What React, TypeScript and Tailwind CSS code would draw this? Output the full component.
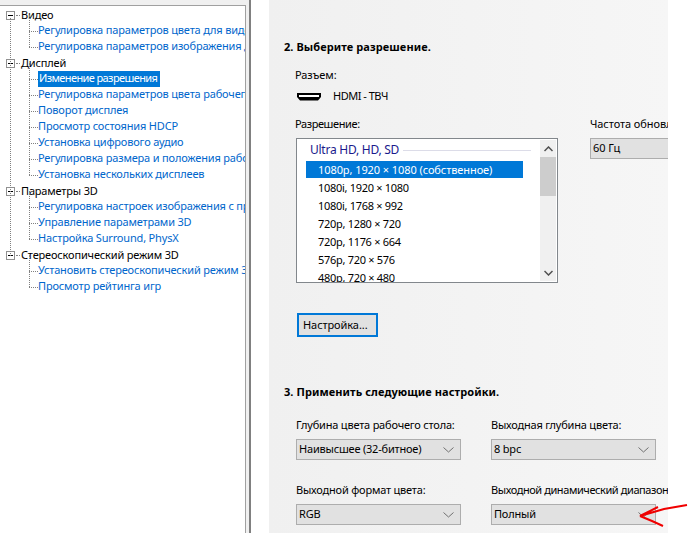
const font = "font-['Noto_Sans','Open_Sans',sans-serif]";

type TreeGroup = { title: string; items: string[] };

const tree: TreeGroup[] = [
  {
    title: "Видео",
    items: ["Регулировка параметров цвета для видео", "Регулировка параметров изображения для видео"],
  },
  {
    title: "Дисплей",
    items: [
      "Изменение разрешения",
      "Регулировка параметров цвета рабочего стола",
      "Поворот дисплея",
      "Просмотр состояния HDCP",
      "Установка цифрового аудио",
      "Регулировка размера и положения рабочего стола",
      "Установка нескольких дисплеев",
    ],
  },
  {
    title: "Параметры 3D",
    items: ["Регулировка настроек изображения с просмотром", "Управление параметрами 3D", "Настройка Surround, PhysX"],
  },
  {
    title: "Стереоскопический режим 3D",
    items: ["Установить стереоскопический режим 3D", "Просмотр рейтинга игр"],
  },
];

const resolutions = [
  "1080i, 1920 × 1080",
  "1080i, 1768 × 992",
  "720p, 1280 × 720",
  "720p, 1176 × 664",
  "576p, 720 × 576",
  "480p, 720 × 480",
];

function Chevron() {
  return (
    <svg width="11" height="6" viewBox="0 0 11 6" className="shrink-0">
      <path d="M0.5 0.5 L5.5 5 L10.5 0.5" fill="none" stroke="#707070" strokeWidth="1" />
    </svg>
  );
}

function Select({ value, width, chevron = true }: { value: string; width: string; chevron?: boolean }) {
  return (
    <div className={`${width} h-[21px] flex items-center justify-between pl-[2px] pr-[6px] bg-[#e1e1e1] border border-[#adadad] text-[11px] text-black whitespace-nowrap`}>
      <span>{value}</span>
      {chevron && <Chevron />}
    </div>
  );
}

function Field({ label, value, width, tight = false }: { label: string; value: string; width: string; tight?: boolean }) {
  return (
    <div className="flex flex-col gap-[7px] tracking-[-0.2px]">
      <div className={`${tight ? "tracking-[-0.42px]" : ""} h-[15px] leading-[15px] text-[11px] text-black whitespace-nowrap`}>{label}</div>
      <Select value={value} width={width} />
    </div>
  );
}

function Tree() {
  return (
    <div className="relative w-[246px] h-[528px] mt-[5px] bg-white border-t border-r border-[#a0a0a0] overflow-hidden pt-[1px] pl-[6px] tracking-[-0.17px]">
      {tree.map((group) => (
        <div key={group.title}>
          <div className="h-[16px] flex items-center">
            <div className="relative w-[9px] h-[9px] border border-[#919191] bg-white shrink-0">
              <div className="absolute left-[1px] top-[3px] w-[5px] h-px bg-black" />
            </div>
            <div className="w-[4px] border-t border-dotted border-[#808080] ml-px" />
            <span className="ml-[1px] text-[11px] text-black whitespace-nowrap">{group.title}</span>
          </div>
          {group.items.map((item) => {
            const active = item === "Изменение разрешения";
            return (
              <div key={item} className="h-[16px] flex items-center pl-[23px] relative">
                <div className="absolute left-[23px] top-[-8px] h-[16px] border-l border-dotted border-[#808080]" />
                <div className="w-[9px] border-t border-dotted border-[#808080] shrink-0" />
                <span
                  className={
                    active
                      ? "h-[16px] w-[122px] pl-px leading-[13px] tracking-[-0.6px] bg-[#0078d7] text-white text-[11px] whitespace-nowrap"
                      : "mb-[2px] text-[11px] text-[#0066cc] whitespace-nowrap"
                  }
                >
                  {item}
                </span>
              </div>
            );
          })}
        </div>
      ))}
      <div className="absolute left-[10px] top-[12px] h-[238px] border-l border-dotted border-[#808080]" />
    </div>
  );
}

function ResolutionList() {
  return (
    <div className="relative w-[262px] h-[145px] bg-white border border-[#82878c] overflow-hidden">
      <div className="flex items-center pl-[13px] h-[22px]">
        <span className="text-[12px] tracking-[-0.25px] text-[#1a1a8c] whitespace-nowrap">Ultra HD, HD, SD</span>
        <div className="ml-[4px] w-[128px] h-px bg-[#dcdce8]" />
      </div>
      <div className="ml-[9px] w-[217px] h-[17px] pl-[12px] leading-[17px] bg-[#0078d7] text-white text-[11px] whitespace-nowrap">
        1080p, 1920 × 1080 (собственное)
      </div>
      {resolutions.map((r) => (
        <div key={r} className="h-[18px] pl-[21px] leading-[19px] tracking-[-0.3px] text-[11px] text-black whitespace-nowrap">
          {r}
        </div>
      ))}
      <div className="absolute right-px top-px bottom-px w-[16px] bg-[#f0f0f0] flex flex-col items-center">
        <div className="h-[17px] flex items-center">
          <svg width="9" height="6" viewBox="0 0 9 6">
            <path d="M0.5 5 L4.5 1 L8.5 5" fill="none" stroke="#505050" strokeWidth="1.5" />
          </svg>
        </div>
        <div className="w-full h-[39px] bg-[#cdcdcd]" />
        <div className="flex-1" />
        <div className="h-[17px] flex items-center">
          <svg width="9" height="6" viewBox="0 0 9 6">
            <path d="M0.5 1 L4.5 5 L8.5 1" fill="none" stroke="#505050" strokeWidth="1.5" />
          </svg>
        </div>
      </div>
    </div>
  );
}

export default function App() {
  return (
    <div className={`${font} relative flex w-[688px] h-[533px] overflow-hidden bg-white`}>
      <div className="w-[251px] h-full bg-[#f0f0f0] border-r-2 border-[#808080] shrink-0">
        <Tree />
      </div>
      <div className="ml-[18px] w-[399px] h-full bg-linear-to-r from-[#f0f0f0] to-[#f6f6f6] pl-[15px] pt-[39px] shrink-0 overflow-hidden tracking-[-0.08px]">
        <h2 className="h-[16px] leading-[16px] text-[11px] font-bold tracking-[0.08px] text-black whitespace-nowrap">2. Выберите разрешение.</h2>
        <div className="ml-[11px] mt-[12px] h-[15px] leading-[15px] text-[11px] text-black">Разъем:</div>
        <div className="ml-[13px] mt-[7px] h-[15px] flex items-center text-[11px] text-black">
          <svg width="24" height="8" viewBox="0 0 24 8" className="shrink-0">
            <path d="M0 0 H24 V4 L21 7.5 H3 L0 4 Z" fill="#000" />
            <rect x="2" y="2" width="20" height="2" fill="#fff" />
          </svg>
          <span className="ml-[12px] tracking-[-0.5px]">HDMI - ТВЧ</span>
        </div>
        <div className="flex mt-[12px]">
          <div className="ml-[11px]">
            <div className="h-[15px] leading-[15px] text-[11px] tracking-[-0.4px] text-black">Разрешение:</div>
            <div className="mt-[7px] ml-px">
              <ResolutionList />
            </div>
          </div>
          <div className="ml-[32px] w-[78px] overflow-hidden shrink-0">
            <div className="h-[15px] leading-[15px] text-[11px] text-black whitespace-nowrap">Частота обновления:</div>
            <div className="mt-[7px]">
              <Select value="60 Гц" width="w-[120px]" chevron={false} />
            </div>
          </div>
        </div>
        <button className="block ml-[13px] mt-[30px] w-[81px] h-[24px] bg-[#e1e1e1] border-2 border-[#0078d7] text-[11px] text-black text-left pl-[4px]">
          Настройка...
        </button>
        <h2 className="mt-[47px] h-[16px] leading-[16px] text-[11px] font-bold tracking-[0.08px] text-black whitespace-nowrap">3. Применить следующие настройки.</h2>
        <div className="ml-[12px] mt-[17px] grid grid-cols-[195px_165px] gap-y-[22px]">
          <Field label="Глубина цвета рабочего стола:" value="Наивысшее (32-битное)" width="w-[165px]" />
          <Field label="Выходная глубина цвета:" value="8 bpc" width="w-[165px]" />
          <Field label="Выходной формат цвета:" value="RGB" width="w-[165px]" />
          <Field label="Выходной динамический диапазон" value="Полный" width="w-[165px]" tight />
        </div>
      </div>
      <svg width="52" height="34" viewBox="0 0 52 34" className="absolute left-[636px] top-[499px]">
        <path d="M51 6 L28 10 L4 17 L22 8 M4 17 L16 22 L27 27" fill="none" stroke="#f00000" strokeWidth="2" />
      </svg>
    </div>
  );
}
